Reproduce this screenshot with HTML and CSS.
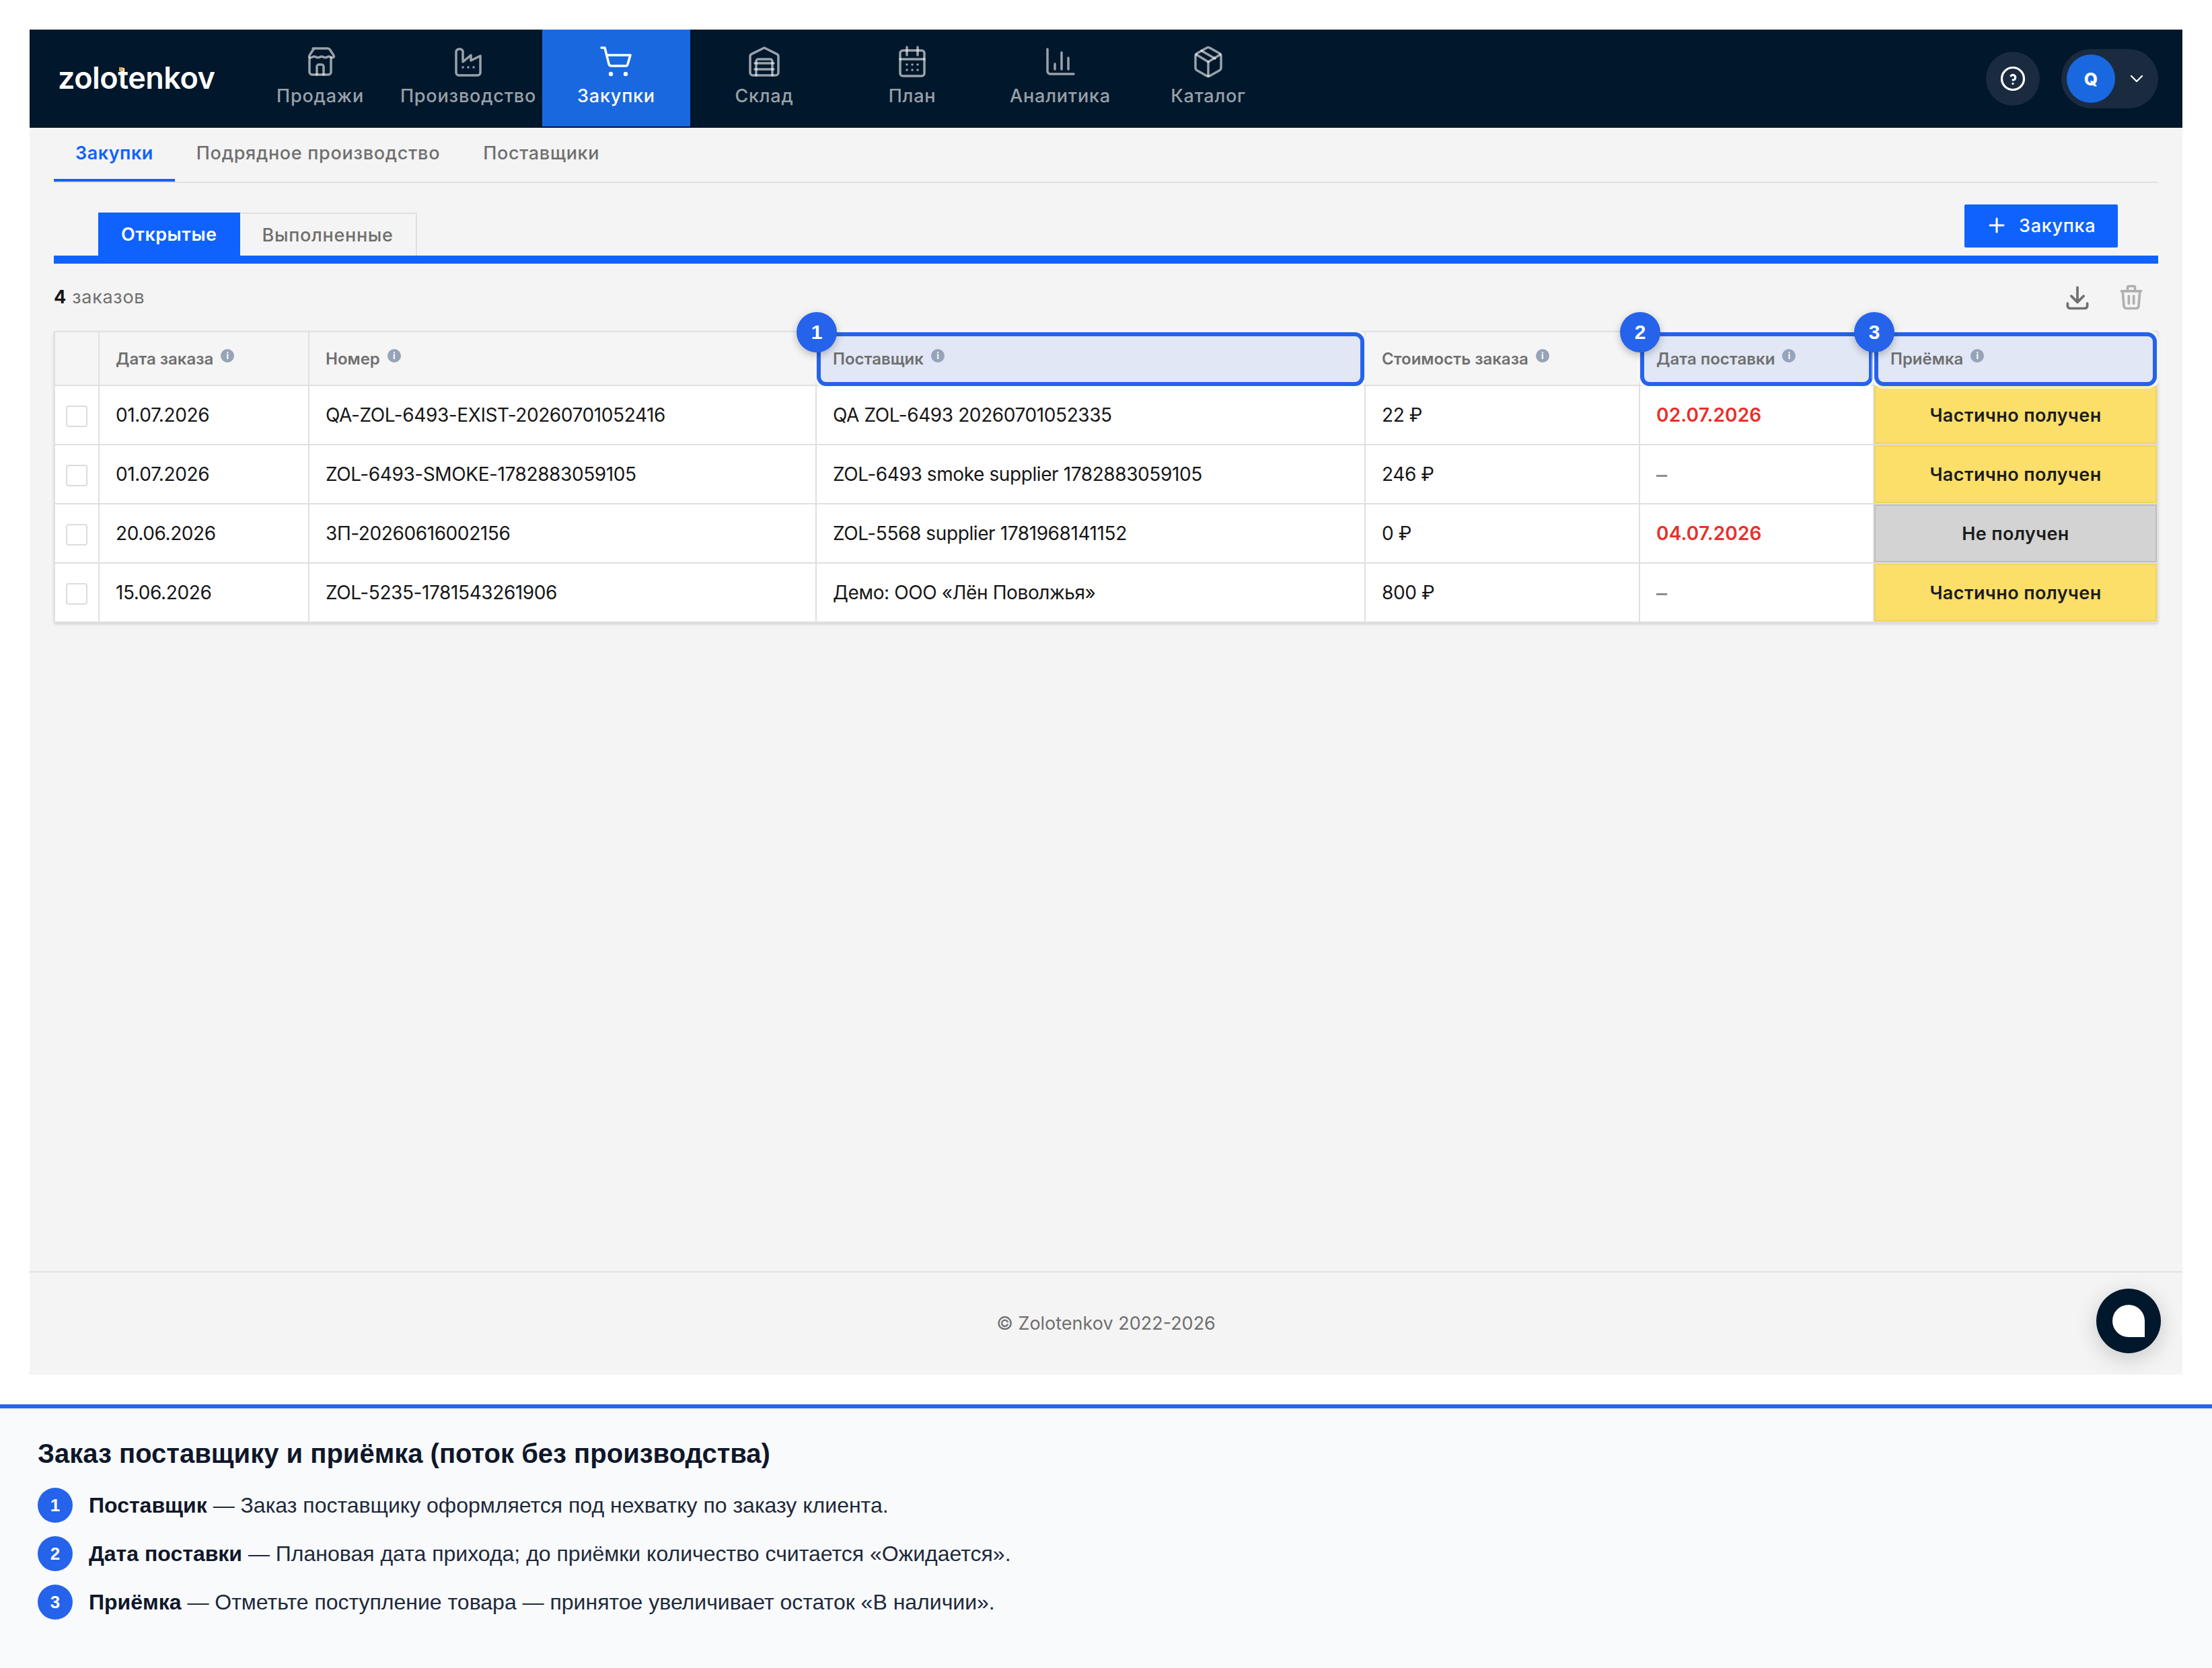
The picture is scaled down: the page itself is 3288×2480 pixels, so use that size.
FILE: index.html
```html
<!DOCTYPE html>
<html lang="ru">
<head>
  <meta charset="UTF-8">
  <title>Закупки - Zolotenkov</title>
  <link rel="stylesheet" href="styles.css">
</head>
<body>
  <div class="app">
    <header class="topbar">
      <div class="logo">zolotenkov<span class="logo-dot"></span></div>
      <nav class="nav">
        <a class="nav-item">
          <svg class="icon" viewBox="0 0 24 24">
            <path d="M6.500 2h11c.7 0 1.300.3 1.700.9L22 7.200c.5.8.1 1.600-1 1.600s-1.500-.8-2.500-.8-1.700.8-2.700.8-1.800-.8-2.800-.8-1.700.8-2.700.8-1.800-.8-2.800-.8-1.500.8-2.500.8-1.500-.8-1-1.600l2.800-4.300c.4-.6 1-.9 1.700-.9z"/>
            <path d="M4 9v10.500a2 2 0 0 0 2 2h12a2 2 0 0 0 2-2V9"/>
            <path d="M9.500 21.500v-6a1.500 1.500 0 0 1 1.500-1.500h2a1.500 1.500 0 0 1 1.500 1.500v6"/>
          </svg>
          <span>Продажи</span>
        </a>
        <a class="nav-item">
          <svg class="icon" viewBox="0 0 24 24">
            <path d="M3 20V4.500a2 2 0 0 1 2-2h1a2 2 0 0 1 2 2V12l6-5v4l7-3.500V20a2 2 0 0 1-2 2H5a2 2 0 0 1-2-2z"/>
            <path d="M8 16v.01M12 16v.01M16 16v.01"/>
          </svg>
          <span>Производство</span>
        </a>
        <a class="nav-item nav-item-active">
          <svg class="icon" viewBox="0 0 24 24">
            <path d="M1 1.500h2.500L6.500 13.500a2 2 0 0 0 2 1.500h10.500a1.500 1.500 0 0 0 1.500-1.200L22.500 7H5"/>
            <circle class="icon-solid" cx="8" cy="21" r="1.600"/>
            <circle class="icon-solid" cx="19" cy="21" r="1.600"/>
          </svg>
          <span>Закупки</span>
        </a>
        <a class="nav-item">
          <svg class="icon" viewBox="0 0 24 24">
            <path d="M3.500 22a2 2 0 0 1-2-2V8a2 2 0 0 1 1.100-1.800L12 1.500l9.400 4.700A2 2 0 0 1 22.500 8v12a2 2 0 0 1-2 2z"/>
            <path d="M6 22V11.500A1.500 1.500 0 0 1 7.500 10h9a1.500 1.500 0 0 1 1.500 1.500V22"/>
            <path d="M5 13h14"/>
            <path d="M5 17.500h14"/>
          </svg>
          <span>Склад</span>
        </a>
        <a class="nav-item">
          <svg class="icon" viewBox="0 0 24 24">
            <path d="M5 3.500h14a2 2 0 0 1 2 2V20.500a2 2 0 0 1-2 2H5a2 2 0 0 1-2-2V5.500a2 2 0 0 1 2-2z"/>
            <path d="M8 1v6"/>
            <path d="M16 1v6"/>
            <path d="M3 10h18"/>
            <path d="M8 14v.01M12 14v.01M16 14v.01M8 18v.01M12 18v.01M16 18v.01"/>
          </svg>
          <span>План</span>
        </a>
        <a class="nav-item">
          <svg class="icon" viewBox="0 0 24 24">
            <path d="M2.500 2.500V19a2 2 0 0 0 2 2H22"/>
            <path d="M8 13.500v4"/>
            <path d="M13 5v12.500"/>
            <path d="M18 9v8.500"/>
          </svg>
          <span>Аналитика</span>
        </a>
        <a class="nav-item">
          <svg class="icon" viewBox="0 0 24 24">
            <path d="M11 1.500a2 2 0 0 1 2 0l7.500 4.300a2 2 0 0 1 1 1.700v9a2 2 0 0 1-1 1.700L13 22.500a2 2 0 0 1-2 0l-7.500-4.300a2 2 0 0 1-1-1.700v-9a2 2 0 0 1 1-1.700z"/>
            <path d="M3 6.500l9 5.500 9-5.500"/>
            <path d="M12 12v10.500"/>
            <path d="M7 3.700l10 5.800"/>
          </svg>
          <span>Каталог</span>
        </a>
      </nav>
      <div class="topbar-right">
        <button class="help-btn">
          <svg class="icon icon-white" viewBox="0 0 24 24">
            <circle cx="12" cy="12" r="9"/>
            <path d="M12 16v.01"/>
            <path d="M12 13a2 2 0 0 0 .914-3.782 1.980 1.980 0 0 0-2.414.483"/>
          </svg>
        </button>
        <div class="user-pill">
          <span class="avatar">Q</span>
          <svg class="chevron icon icon-white" viewBox="0 0 24 24"><path d="M6 9l6 6 6-6"/></svg>
        </div>
      </div>
    </header>

    <main class="content">
      <div class="subtabs">
        <a class="subtab subtab-active">Закупки</a>
        <a class="subtab">Подрядное производство</a>
        <a class="subtab">Поставщики</a>
      </div>

      <div class="tabs-row">
        <div class="tabs">
          <a class="tab tab-active">Открытые</a>
          <a class="tab">Выполненные</a>
        </div>
        <button class="add-btn">
          <svg class="plus icon icon-white" viewBox="0 0 24 24"><path d="M12 2v20M2 12h20"/></svg>
          Закупка
        </button>
      </div>

      <div class="toolbar">
        <div class="count"><b>4</b> заказов</div>
        <div class="tools">
          <svg class="tool icon" viewBox="0 0 24 24">
            <path d="M4 17v2a2 2 0 0 0 2 2h12a2 2 0 0 0 2-2v-2"/>
            <path d="M7 11l5 5 5-5"/>
            <path d="M12 4v12"/>
          </svg>
          <svg class="tool tool-off icon" viewBox="0 0 24 24">
            <path d="M4 7h16"/>
            <path d="M10 11v6"/>
            <path d="M14 11v6"/>
            <path d="M5 7l1 12a2 2 0 0 0 2 2h8a2 2 0 0 0 2-2l1-12"/>
            <path d="M9 7V4a1 1 0 0 1 1-1h4a1 1 0 0 1 1 1v3"/>
          </svg>
        </div>
      </div>

      <table class="orders">
        <colgroup>
          <col class="col-check"><col class="col-date"><col class="col-num"><col class="col-supplier"><col class="col-cost"><col class="col-delivery"><col class="col-status">
        </colgroup>
        <thead>
          <tr>
            <th></th>
            <th><span class="th-label">Дата заказа<i class="info">i</i></span></th>
            <th><span class="th-label">Номер<i class="info">i</i></span></th>
            <th><div class="mark"><span class="badge">1</span></div><span class="th-label">Поставщик<i class="info">i</i></span></th>
            <th><span class="th-label">Стоимость заказа<i class="info">i</i></span></th>
            <th><div class="mark"><span class="badge">2</span></div><span class="th-label">Дата поставки<i class="info">i</i></span></th>
            <th><div class="mark"><span class="badge">3</span></div><span class="th-label">Приёмка<i class="info">i</i></span></th>
          </tr>
        </thead>
        <tbody>
          <tr>
            <td><span class="check"></span></td>
            <td>01.07.2026</td>
            <td>QA-ZOL-6493-EXIST-20260701052416</td>
            <td>QA ZOL-6493 20260701052335</td>
            <td>22 ₽</td>
            <td class="late">02.07.2026</td>
            <td class="status status-part">Частично получен</td>
          </tr>
          <tr>
            <td><span class="check"></span></td>
            <td>01.07.2026</td>
            <td>ZOL-6493-SMOKE-1782883059105</td>
            <td>ZOL-6493 smoke supplier 1782883059105</td>
            <td>246 ₽</td>
            <td class="empty">–</td>
            <td class="status status-part">Частично получен</td>
          </tr>
          <tr>
            <td><span class="check"></span></td>
            <td>20.06.2026</td>
            <td>ЗП-20260616002156</td>
            <td>ZOL-5568 supplier 1781968141152</td>
            <td>0 ₽</td>
            <td class="late">04.07.2026</td>
            <td class="status status-none">Не получен</td>
          </tr>
          <tr>
            <td><span class="check"></span></td>
            <td>15.06.2026</td>
            <td>ZOL-5235-1781543261906</td>
            <td>Демо: ООО «Лён Поволжья»</td>
            <td>800 ₽</td>
            <td class="empty">–</td>
            <td class="status status-part">Частично получен</td>
          </tr>
        </tbody>
      </table>
    </main>

    <footer class="footer">© Zolotenkov 2022-2026</footer>
    <button class="chat-btn"><span class="chat-drop"></span></button>
  </div>

  <section class="notes">
    <h2 class="notes-title">Заказ поставщику и приёмка (поток без производства)</h2>
    <div class="note"><span class="note-num">1</span><p><b>Поставщик</b> — Заказ поставщику оформляется под нехватку по заказу клиента.</p></div>
    <div class="note"><span class="note-num">2</span><p><b>Дата поставки</b> — Плановая дата прихода; до приёмки количество считается «Ожидается».</p></div>
    <div class="note"><span class="note-num">3</span><p><b>Приёмка</b> — Отметьте поступление товара — принятое увеличивает остаток «В наличии».</p></div>
  </section>
</body>
</html>
```

FILE: styles.css
```css
* {
  box-sizing: border-box;
}

body {
  margin: 0;
  background: #fff;
  font-family: Inter, "Noto Sans", sans-serif;
  color: #161616;
}

.app {
  position: relative;
  display: flex;
  flex-direction: column;
  height: 2000px;
  margin: 44px 44px 0;
  background: #f4f4f4;
}

/* top bar */
.topbar {
  display: flex;
  height: 146px;
  flex: none;
  background: #01172b;
}

.logo {
  position: relative;
  width: 322px;
  padding: 46px 0 0 42px;
  font-size: 45px;
  line-height: 52px;
  font-weight: 600;
  letter-spacing: -0.5px;
  color: #fff;
}

.logo-dot {
  position: absolute;
  left: 133px;
  top: 56px;
  width: 6px;
  height: 6px;
  background: #dba54a;
}

.nav {
  display: flex;
}

.nav-item {
  display: flex;
  flex-direction: column;
  align-items: center;
  width: 220px;
  height: 144px;
  padding-top: 24px;
  font-size: 27px;
  line-height: 36px;
  font-weight: 500;
  letter-spacing: 0.8px;
  white-space: nowrap;
  color: rgba(255, 255, 255, 0.6);
}

.nav-item span {
  margin-top: 9px;
}

.nav-item-active {
  background: #1a68e0;
  color: #fff;
}

.icon {
  width: 48px;
  height: 48px;
  fill: none;
  stroke: #fff;
  stroke-opacity: 0.6;
  stroke-width: 1.75;
  stroke-linecap: round;
  stroke-linejoin: round;
}

.nav-item-active .icon,
.icon-white {
  stroke-opacity: 1;
}

.icon-solid {
  fill: #fff;
  stroke: none;
}

.topbar-right {
  display: flex;
  align-items: center;
  gap: 32px;
  margin-left: auto;
  margin-right: 36px;
}

.help-btn {
  display: flex;
  align-items: center;
  justify-content: center;
  width: 80px;
  height: 80px;
  padding: 0;
  border: 0;
  border-radius: 50%;
  background: #1a2b40;
}

.help-btn .icon {
  width: 44px;
  height: 44px;
}

.user-pill {
  display: flex;
  align-items: center;
  width: 144px;
  height: 88px;
  padding: 0 8px;
  border-radius: 44px;
  background: #1a2b40;
}

.avatar {
  display: flex;
  align-items: center;
  justify-content: center;
  width: 72px;
  height: 72px;
  border-radius: 50%;
  background: #1a68e0;
  font-size: 26px;
  font-weight: 800;
  color: #fff;
}

.chevron {
  width: 32px;
  height: 32px;
  margin-left: 16px;
}

/* content */
.content {
  flex: 1;
  padding: 0 36px;
}

.subtabs {
  display: flex;
  height: 82px;
  border-bottom: 2px solid #e0e0e0;
}

.subtab {
  display: flex;
  align-items: center;
  height: 80px;
  padding: 0 32px 2px;
  border-bottom: 4px solid transparent;
  font-size: 27px;
  font-weight: 500;
  letter-spacing: 0.7px;
  color: #6f6f6f;
}

.subtab-active {
  border-bottom-color: #0f62fe;
  color: #0f62fe;
  font-weight: 600;
  letter-spacing: 0.5px;
}

.tabs-row {
  display: flex;
  justify-content: space-between;
  height: 88px;
  margin-top: 32px;
  padding: 0 60px 0 66px;
  border-bottom: 12px solid #0f62fe;
}

.tabs {
  display: flex;
  align-self: flex-end;
}

.tab {
  display: flex;
  align-items: center;
  height: 64px;
  padding: 0 33px;
  border: 2px solid #e0e0e0;
  border-bottom: 0;
  border-left: 0;
  font-size: 27px;
  font-weight: 500;
  letter-spacing: 0.7px;
  color: #6f6f6f;
}

.tab-active {
  border: 0;
  padding: 0 34px;
  background: #0f62fe;
  color: #fff;
  font-weight: 600;
  letter-spacing: 0.5px;
}

.add-btn {
  display: flex;
  align-items: center;
  width: 228px;
  height: 64px;
  padding: 0 0 2px 36px;
  border: 0;
  border-radius: 2px;
  background: #0f62fe;
  font-family: inherit;
  font-size: 27px;
  font-weight: 500;
  letter-spacing: 0.7px;
  color: #fff;
}

.plus {
  width: 24px;
  height: 24px;
  margin-right: 21px;
  stroke-width: 3;
}

.toolbar {
  display: flex;
  align-items: center;
  justify-content: space-between;
  height: 100px;
}

.count {
  margin-top: -2px;
  font-size: 27px;
  letter-spacing: 0.7px;
  color: #6f6f6f;
}

.count b {
  color: #161616;
}

.tools {
  display: flex;
  gap: 36px;
  padding-right: 18px;
}

.tool {
  width: 44px;
  height: 44px;
  stroke: #707070;
  stroke-opacity: 1;
  stroke-width: 2;
}

.tool-off {
  stroke: #b0b0b0;
}

/* table */
.orders {
  width: 3128px;
  table-layout: fixed;
  border-collapse: separate;
  border-spacing: 0;
  border-radius: 4px;
  box-shadow: 0 2px 4px rgba(0, 0, 0, 0.15);
  background: #fff;
}

.col-check { width: 68px; }
.col-date { width: 312px; }
.col-num { width: 754px; }
.col-supplier { width: 816px; }
.col-cost { width: 408px; }
.col-delivery { width: 348px; }
.col-status { width: 422px; }

.orders th,
.orders td {
  padding: 0 24px;
  border-right: 2px solid #e0e0e0;
  border-bottom: 2px solid #e0e0e0;
  text-align: left;
}

.orders th:first-child,
.orders td:first-child {
  padding: 0;
  border-left: 2px solid #e0e0e0;
  text-align: center;
}

.orders th {
  position: relative;
  height: 82px;
  border-top: 2px solid #e0e0e0;
  background: #f5f5f5;
  font-size: 24px;
  font-weight: 600;
  color: #6f6f6f;
}

.orders td {
  height: 88px;
  font-size: 28px;
  font-weight: 400;
  letter-spacing: -0.4px;
  color: #161616;
}

.th-label {
  position: relative;
  z-index: 1;
}

.info {
  display: inline-block;
  width: 20px;
  height: 20px;
  margin-left: 11px;
  border-radius: 50%;
  background: #96a3b8;
  font-size: 13px;
  line-height: 20px;
  font-style: normal;
  font-weight: 700;
  text-align: center;
  vertical-align: 8px;
  color: #fff;
}

.mark {
  position: absolute;
  top: 0;
  right: 0;
  bottom: -2px;
  left: 0;
  border: 6px solid #2563eb;
  border-radius: 14px;
  background: #e1e7f5;
  box-shadow: 0 0 0 4px rgba(255, 255, 255, 0.55);
}

.badge {
  position: absolute;
  top: -36px;
  left: -36px;
  z-index: 2;
  display: flex;
  align-items: center;
  justify-content: center;
  width: 60px;
  height: 60px;
  border-radius: 50%;
  background: #2563eb;
  box-shadow: 0 4px 12px rgba(0, 0, 0, 0.25);
  font-family: "Liberation Sans", sans-serif;
  font-size: 30px;
  font-weight: 700;
  color: #fff;
}

.check {
  display: inline-block;
  width: 32px;
  height: 32px;
  border: 2px solid #dcdcdc;
  border-radius: 4px;
  background: #fff;
  vertical-align: middle;
}

.orders .late {
  font-weight: 600;
  letter-spacing: 0.16px;
  color: #e8302c;
}

.orders .empty {
  font-size: 32px;
  font-weight: 500;
  color: #8d8d8d;
}

.orders .status {
  font-size: 27px;
  font-weight: 600;
  letter-spacing: 0.4px;
  text-align: center;
  color: #1c1c1c;
}

.orders .status-part {
  background: #fbdf68;
  box-shadow: inset 0 0 0 2px #f2d555;
}

.orders .status-none {
  background: #d3d3d3;
  box-shadow: inset 0 0 0 2px #bdbdbd;
}

/* footer */
.footer {
  flex: none;
  display: flex;
  align-items: center;
  justify-content: center;
  height: 154px;
  padding-bottom: 2px;
  border-top: 2px solid #e0e0e0;
  font-size: 27px;
  color: #6f6f6f;
}

.chat-btn {
  position: absolute;
  right: 32px;
  bottom: 32px;
  display: flex;
  align-items: center;
  justify-content: center;
  width: 96px;
  height: 96px;
  padding: 0;
  border: 0;
  border-radius: 50%;
  background: #01172b;
  box-shadow: 0 8px 32px rgba(0, 0, 0, 0.18);
}

.chat-drop {
  width: 48px;
  height: 48px;
  border-radius: 50% 50% 0 50%;
  background: #fff;
}

/* notes panel */
.notes {
  height: 392px;
  margin-top: 44px;
  padding: 43px 56px 0;
  border-top: 6px solid #2563eb;
  background: #f8fafc;
  font-family: "Liberation Sans", Arial, sans-serif;
  color: #1e293b;
}

.notes-title {
  margin: 0 0 27px;
  font-size: 40px;
  line-height: 48px;
  font-weight: 700;
  color: #0f172a;
}

.note {
  display: flex;
  align-items: center;
  gap: 24px;
  height: 52px;
  margin-bottom: 20px;
}

.note p {
  margin: 0;
  font-size: 32px;
}

.note b {
  color: #0f172a;
}

.note-num {
  display: flex;
  align-items: center;
  justify-content: center;
  width: 52px;
  height: 52px;
  border-radius: 50%;
  background: #2563eb;
  font-size: 26px;
  font-weight: 700;
  color: #fff;
}
```
